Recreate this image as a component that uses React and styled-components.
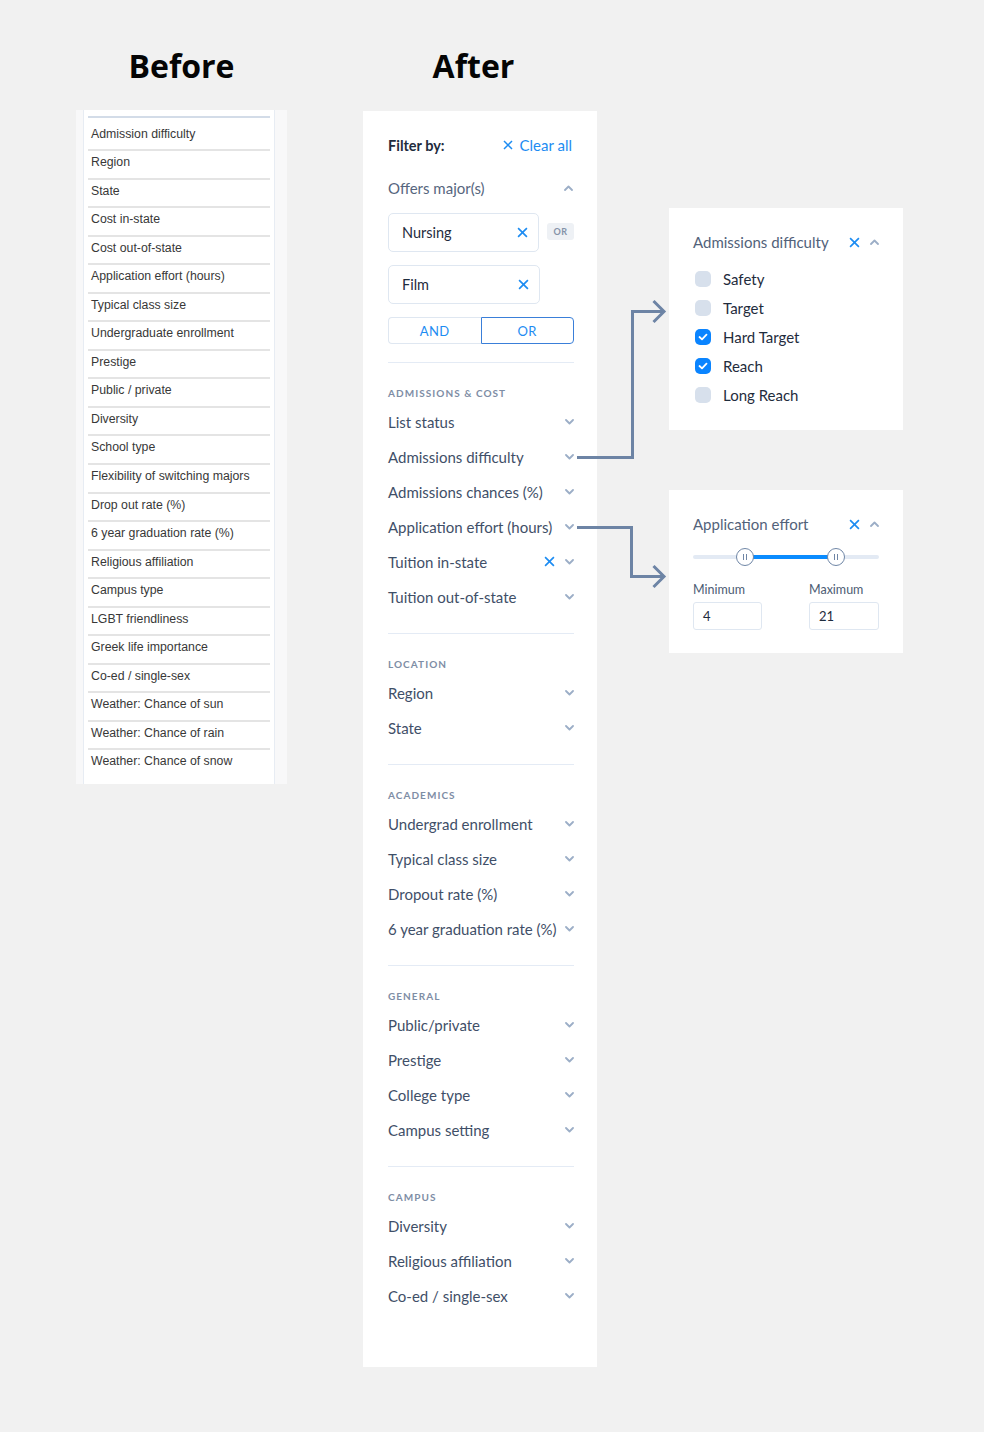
import React from 'react';
import styled, { createGlobalStyle } from 'styled-components';

const GlobalStyle = createGlobalStyle`
  body {
    margin: 0;
    background: #f1f1f1;
    font-family: Lato, "Noto Sans", sans-serif;
  }
`;

const Page = styled.div`
  position: relative;
  width: 984px;
  height: 1432px;
  display: flex;
  align-items: flex-start;
  padding-left: 76px;
  box-sizing: border-box;
`;

const Column = styled.div`
  width: ${p => p.$width}px;
  margin-left: ${p => p.$gap || 0}px;
  padding-top: ${p => p.$top || 0}px;
  display: flex;
  flex-direction: column;
`;

const Title = styled.h1`
  margin: 40px 0 0;
  height: 52px;
  line-height: 52px;
  padding-right: ${p => p.$shift || 0}px;
  text-align: center;
  font-family: "Open Sans", sans-serif;
  font-size: 32px;
  font-weight: 700;
  color: #050505;
`;

/* ---------- before ---------- */

const OldPanel = styled.div`
  margin-top: 18px;
  background: #f8f8f9;
  padding: 0 12px 0 7px;
`;

const OldList = styled.ul`
  list-style: none;
  margin: 0;
  background: #fff;
  border-left: 1px solid #e7ecf3;
  border-right: 1px solid #e7ecf3;
  padding: 6px 4px 5px;
`;

const OldRow = styled.li`
  height: 28.55px;
  box-sizing: border-box;
  padding: 4px 0 0 3px;
  line-height: 14px;
  font-family: "Liberation Sans", Arial, sans-serif;
  font-size: 12.3px;
  color: #383838;
  border-bottom: 2px solid #e4e4e4;

  &:first-child {
    height: 35px;
    padding-top: 8.5px;
    border-top: 2px solid #d3dce8;
  }
  &:last-child {
    border-bottom: none;
  }
`;

/* ---------- after ---------- */

const FilterPanel = styled.div`
  margin-top: 19px;
  height: 1256px;
  box-sizing: border-box;
  background: #fff;
  padding: 24px 23px 0 25px;
`;

const HeaderRow = styled.div`
  display: flex;
  justify-content: space-between;
  align-items: center;
  height: 20px;
  padding-right: 2px;
`;

const FilterLabel = styled.span`
  font-size: 14.5px;
  font-weight: 700;
  color: #1f2c3d;
`;

const ClearAll = styled.button`
  display: flex;
  align-items: center;
  gap: 7px;
  border: none;
  background: none;
  padding: 0;
  font-family: inherit;
  font-size: 15px;
  color: #1d8cf2;
  cursor: pointer;
`;

const ExpandedHead = styled.div`
  display: flex;
  justify-content: space-between;
  align-items: center;
  height: 20px;
  margin-top: ${p => p.$mt || 0}px;
  padding-right: 1px;
  font-size: 15px;
  color: #56667e;
`;

const ChipRow = styled.div`
  display: flex;
  align-items: flex-start;
  gap: 8px;
  margin-top: ${p => p.$mt}px;
`;

const Chip = styled.div`
  width: 152px;
  height: 39px;
  box-sizing: border-box;
  border: 1px solid #dfe7f1;
  border-radius: 5px;
  display: flex;
  align-items: center;
  justify-content: space-between;
  padding: 0 10px 0 13px;
  font-size: 14.5px;
  color: #1f2c3d;
`;

const OrBadge = styled.span`
  margin-top: 10px;
  width: 27px;
  height: 17px;
  border-radius: 3px;
  background: #eef1f5;
  font-size: 9px;
  font-weight: 700;
  color: #8493a8;
  display: flex;
  align-items: center;
  justify-content: center;
  letter-spacing: 0.5px;
`;

const Toggle = styled.div`
  display: flex;
  margin-top: 13px;
  height: 27px;
`;

const ToggleButton = styled.button`
  flex: 1;
  border: 1px solid ${p => (p.$active ? '#3a7fd9' : '#dfe7f1')};
  border-radius: ${p => (p.$active ? '0 4px 4px 0' : '4px 0 0 4px')};
  ${p => !p.$active && 'border-right: none;'}
  background: #fff;
  font-family: inherit;
  font-size: 13px;
  color: #1d8cf2;
  letter-spacing: 0.4px;
  padding: 0;
`;

const Section = styled.section`
  border-top: 1px solid #e4ebf5;
  margin-top: ${p => p.$mt || 0}px;
  padding: 24px 0 18.5px;
`;

const SectionLabel = styled.div`
  height: 12px;
  line-height: 12px;
  margin-bottom: 5.5px;
  font-size: 10px;
  font-weight: 700;
  letter-spacing: 1.05px;
  color: #7e8da5;
  text-transform: uppercase;
`;

const FilterItem = styled.div`
  height: 35px;
  display: flex;
  align-items: center;
  font-size: 15px;
  color: #3f4f68;
`;

const ItemText = styled.span`
  flex: 1;
`;

const ItemIcons = styled.span`
  display: flex;
  align-items: center;
  gap: 10px;
`;

/* ---------- detail cards ---------- */

const Card = styled.div`
  background: #fff;
  padding: 24px 24px ${p => p.$pb}px;
  margin-top: ${p => p.$mt || 0}px;
`;

const CardHead = styled.div`
  display: flex;
  align-items: center;
  height: 20px;
  font-size: 15px;
  color: #52627a;
`;

const CardTitle = styled.span`
  flex: 1;
`;

const CardIcons = styled.span`
  display: flex;
  align-items: center;
  gap: 10px;
`;

const CheckList = styled.div`
  margin-top: 12.5px;
`;

const CheckRow = styled.label`
  display: flex;
  align-items: center;
  gap: 12px;
  height: 29px;
  padding-left: 2px;
  font-size: 15px;
  color: #1f2c3d;
`;

const Box = styled.span`
  width: 16px;
  height: 16px;
  border-radius: 5px;
  background: ${p => (p.$checked ? '#0a84ff' : '#d7e0ec')};
  display: flex;
  align-items: center;
  justify-content: center;
`;

const Slider = styled.div`
  position: relative;
  margin-top: 13px;
  height: 20px;
  display: flex;
  align-items: center;
`;

const Track = styled.div`
  width: 100%;
  height: 4px;
  border-radius: 2px;
  background: #e3eaf4;
`;

const Fill = styled.div`
  position: absolute;
  top: 8px;
  height: 4px;
  background: #0a8cff;
`;

const Thumb = styled.div`
  position: absolute;
  top: 1px;
  width: 18px;
  height: 18px;
  margin-left: -9px;
  box-sizing: border-box;
  border-radius: 50%;
  border: 1.5px solid #6f86a6;
  background: #fff;
  display: flex;
  align-items: center;
  justify-content: center;
  gap: 2px;

  &::before,
  &::after {
    content: '';
    width: 1px;
    height: 6px;
    background: #6f86a6;
  }
`;

const RangeInputs = styled.div`
  display: flex;
  justify-content: space-between;
  margin-top: 16px;
`;

const RangeField = styled.div`
  width: ${p => p.$w}px;
  display: flex;
  flex-direction: column;
`;

const RangeLabel = styled.span`
  line-height: 14px;
  font-size: 12.5px;
  color: #4c5c73;
`;

const RangeBox = styled.div`
  margin-top: 5px;
  height: 28px;
  box-sizing: border-box;
  border: 1px solid #dfe7f1;
  border-radius: 3px;
  padding-left: 9px;
  display: flex;
  align-items: center;
  font-size: 13px;
  color: #1f2c3d;
`;

const Connectors = styled.svg`
  position: absolute;
  left: 0;
  top: 0;
  pointer-events: none;
`;

/* ---------- icons ---------- */

const Close = ({ size = 10 }) => (
  <svg width={size} height={size} viewBox="0 0 10 10">
    <path d="M1 1L9 9M9 1L1 9" stroke="#1d8cf2" strokeWidth="1.5" fill="none" />
  </svg>
);

const Chevron = ({ up }) => (
  <svg width="9" height="6" viewBox="0 0 9 6">
    <path
      d={up ? 'M1 5L4.5 1.5L8 5' : 'M1 1L4.5 4.5L8 1'}
      stroke="#9caec7"
      strokeWidth="1.8"
      fill="none"
      strokeLinecap="round"
      strokeLinejoin="round"
    />
  </svg>
);

const Tick = () => (
  <svg width="10" height="8" viewBox="0 0 10 8">
    <path d="M1.5 4L4 6.3L8.5 1.7" stroke="#fff" strokeWidth="1.8" fill="none" strokeLinecap="round" strokeLinejoin="round" />
  </svg>
);

/* ---------- data ---------- */

const oldFilters = [
  'Admission difficulty', 'Region', 'State', 'Cost in-state', 'Cost out-of-state',
  'Application effort (hours)', 'Typical class size', 'Undergraduate enrollment',
  'Prestige', 'Public / private', 'Diversity', 'School type',
  'Flexibility of switching majors', 'Drop out rate (%)', '6 year graduation rate (%)',
  'Religious affiliation', 'Campus type', 'LGBT friendliness', 'Greek life importance',
  'Co-ed / single-sex', 'Weather: Chance of sun', 'Weather: Chance of rain',
  'Weather: Chance of snow',
];

const sections = [
  {
    label: 'Admissions & cost',
    items: [
      { name: 'List status' },
      { name: 'Admissions difficulty' },
      { name: 'Admissions chances (%)' },
      { name: 'Application effort (hours)' },
      { name: 'Tuition in-state', active: true },
      { name: 'Tuition out-of-state' },
    ],
  },
  { label: 'Location', items: [{ name: 'Region' }, { name: 'State' }] },
  {
    label: 'Academics',
    items: [
      { name: 'Undergrad enrollment' },
      { name: 'Typical class size' },
      { name: 'Dropout rate (%)' },
      { name: '6 year graduation rate (%)' },
    ],
  },
  {
    label: 'General',
    items: [
      { name: 'Public/private' },
      { name: 'Prestige' },
      { name: 'College type' },
      { name: 'Campus setting' },
    ],
  },
  {
    label: 'Campus',
    items: [{ name: 'Diversity' }, { name: 'Religious affiliation' }, { name: 'Co-ed / single-sex' }],
  },
];

const difficulty = [
  { name: 'Safety', checked: false },
  { name: 'Target', checked: false },
  { name: 'Hard Target', checked: true },
  { name: 'Reach', checked: true },
  { name: 'Long Reach', checked: false },
];

const effort = { lo: 27.96, hi: 76.9, min: 4, max: 21 };

const App = () => (
  <>
    <GlobalStyle />
    <Page>
      <Column $width={211}>
        <Title>Before</Title>
        <OldPanel>
          <OldList>
            {oldFilters.map(f => (
              <OldRow key={f}>{f}</OldRow>
            ))}
          </OldList>
        </OldPanel>
      </Column>

      <Column $width={234} $gap={76}>
        <Title $shift={13}>After</Title>
        <FilterPanel>
          <HeaderRow>
            <FilterLabel>Filter by:</FilterLabel>
            <ClearAll>
              <Close />
              Clear all
            </ClearAll>
          </HeaderRow>

          <ExpandedHead $mt={23}>
            Offers major(s)
            <Chevron up />
          </ExpandedHead>
          <ChipRow $mt={15}>
            <Chip>
              Nursing
              <Close size={11} />
            </Chip>
            <OrBadge>OR</OrBadge>
          </ChipRow>
          <ChipRow $mt={13}>
            <Chip>
              Film
              <Close size={11} />
            </Chip>
          </ChipRow>
          <Toggle>
            <ToggleButton>AND</ToggleButton>
            <ToggleButton $active>OR</ToggleButton>
          </Toggle>

          {sections.map((s, i) => (
            <Section key={s.label} $mt={i === 0 ? 17.5 : 0}>
              <SectionLabel>{s.label}</SectionLabel>
              {s.items.map(item => (
                <FilterItem key={item.name}>
                  <ItemText>{item.name}</ItemText>
                  <ItemIcons>
                    {item.active && <Close size={11} />}
                    <Chevron />
                  </ItemIcons>
                </FilterItem>
              ))}
            </Section>
          ))}
        </FilterPanel>
      </Column>

      <Column $width={234} $gap={72} $top={208}>
        <Card $pb={20.5}>
          <CardHead>
            <CardTitle>Admissions difficulty</CardTitle>
            <CardIcons>
              <Close size={11} />
              <Chevron up />
            </CardIcons>
          </CardHead>
          <CheckList>
            {difficulty.map(d => (
              <CheckRow key={d.name}>
                <Box $checked={d.checked}>{d.checked && <Tick />}</Box>
                {d.name}
              </CheckRow>
            ))}
          </CheckList>
        </Card>

        <Card $pb={23} $mt={60}>
          <CardHead>
            <CardTitle>Application effort</CardTitle>
            <CardIcons>
              <Close size={11} />
              <Chevron up />
            </CardIcons>
          </CardHead>
          <Slider>
            <Track />
            <Fill style={{ left: `${effort.lo}%`, width: `${effort.hi - effort.lo}%` }} />
            <Thumb style={{ left: `${effort.lo}%` }} />
            <Thumb style={{ left: `${effort.hi}%` }} />
          </Slider>
          <RangeInputs>
            <RangeField $w={69}>
              <RangeLabel>Minimum</RangeLabel>
              <RangeBox>{effort.min}</RangeBox>
            </RangeField>
            <RangeField $w={70}>
              <RangeLabel>Maximum</RangeLabel>
              <RangeBox>{effort.max}</RangeBox>
            </RangeField>
          </RangeInputs>
        </Card>
      </Column>

      <Connectors width="984" height="1432">
        <g stroke="#6d84a5" strokeWidth="3" fill="none">
          <path d="M577 457.5H632.5V311.5H664" />
          <path d="M653.5 301L664 311.5L653.5 322" />
          <path d="M577 527.5H631.5V576.5H664" />
          <path d="M653.5 566L664 576.5L653.5 587" />
        </g>
      </Connectors>
    </Page>
  </>
);

export default App;
